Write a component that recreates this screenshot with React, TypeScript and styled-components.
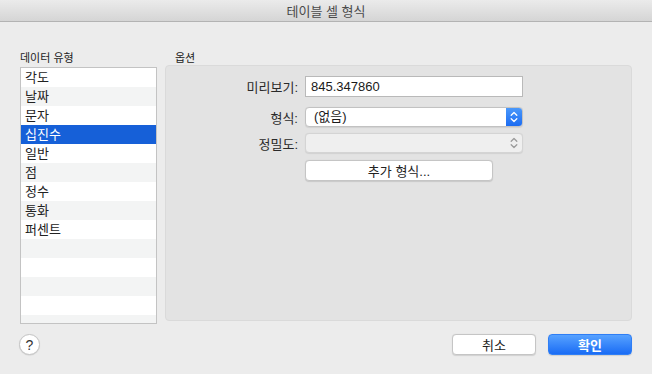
import styled, { createGlobalStyle } from "styled-components";

const GlobalStyles = createGlobalStyle`
  html, body {
    margin: 0;
    padding: 0;
    background: #ececec;
  }
  body {
    font-family: "Liberation Sans", "Noto Sans CJK KR", sans-serif;
    color: #222;
  }
`;

const Window = styled.div`
  width: 652px;
  height: 374px;
  display: flex;
  flex-direction: column;
  background: #ececec;
  overflow: hidden;
`;

const TitleBar = styled.div`
  height: 21px;
  border-bottom: 1px solid #b3b3b3;
  background: linear-gradient(#ebebeb, #d5d5d5);
  display: flex;
  align-items: center;
  justify-content: center;
  font-size: 13px;
  color: #4a4a4a;
`;

const Body = styled.div`
  display: grid;
  grid-template-columns: 137px 467px;
  column-gap: 8px;
  padding: 29px 20px 0 20px;
`;

const Column = styled.div`
  display: flex;
  flex-direction: column;
`;

const SectionLabel = styled.div<{ $indent: number }>`
  font-size: 11px;
  line-height: 14px;
  height: 14px;
  padding-left: ${(p) => p.$indent}px;
  color: #222;
`;

const List = styled.div`
  margin-top: 2px;
  height: 255px;
  border: 1px solid #c3c3c3;
  background: #fff;
  overflow: hidden;
`;

const ListRow = styled.div<{ $odd: boolean; $selected?: boolean }>`
  height: 19px;
  line-height: 19px;
  padding-left: 4px;
  font-size: 13px;
  background: ${(p) => (p.$selected ? "#1660d8" : p.$odd ? "#f3f4f4" : "#fff")};
  color: ${(p) => (p.$selected ? "#fff" : "#222")};
`;

const Panel = styled.div`
  height: 256px;
  border: 1px solid #dadada;
  border-radius: 4px;
  background: #e3e3e3;
  padding-top: 10px;
  box-sizing: border-box;
`;

const FormRow = styled.div<{ $gap: number }>`
  display: grid;
  grid-template-columns: 132px 218px;
  column-gap: 7px;
  align-items: center;
  margin-top: ${(p) => p.$gap}px;
`;

const FieldLabel = styled.div`
  text-align: right;
  font-size: 13px;
  color: #2a2a2a;
`;

const TextField = styled.div`
  height: 21px;
  box-sizing: border-box;
  border: 1px solid #b9b9b9;
  background: #fff;
  font-size: 13px;
  line-height: 19px;
  padding-left: 5px;
  color: #1a1a1a;
`;

const Select = styled.div<{ $disabled?: boolean }>`
  height: 20px;
  box-sizing: border-box;
  border: 1px solid ${(p) => (p.$disabled ? "#d4d4d4" : "#c2c2c2")};
  border-radius: 4px;
  background: ${(p) => (p.$disabled ? "#efefef" : "#fff")};
  display: flex;
  align-items: stretch;
  font-size: 13px;
  box-shadow: 0 0.5px 1px rgba(0, 0, 0, 0.08);
  overflow: hidden;
`;

const SelectText = styled.div`
  flex: 1;
  line-height: 18px;
  padding-left: 8px;
  color: #1a1a1a;
`;

const Stepper = styled.div<{ $active: boolean }>`
  width: 16px;
  display: flex;
  align-items: center;
  justify-content: center;
  background: ${(p) => (p.$active ? "linear-gradient(#4a98fb, #1c6cf2)" : "transparent")};
  color: ${(p) => (p.$active ? "#fff" : "#9a9a9a")};
`;

const PushButton = styled.div<{ $width: number; $primary?: boolean }>`
  width: ${(p) => p.$width}px;
  height: 21px;
  box-sizing: border-box;
  border-radius: 4px;
  display: flex;
  align-items: center;
  justify-content: center;
  font-size: 13px;
  font-weight: ${(p) => (p.$primary ? 600 : 400)};
  border: 1px solid ${(p) => (p.$primary ? "#2f7ef5" : "#c5c5c5")};
  background: ${(p) => (p.$primary ? "linear-gradient(#57a2ff, #1a6cf5)" : "#fff")};
  color: ${(p) => (p.$primary ? "#fff" : "#222")};
  box-shadow: 0 0.5px 1px rgba(0, 0, 0, 0.12);
`;

const Footer = styled.div`
  display: flex;
  align-items: center;
  padding: 10px 20px 0 19px;
  gap: 12px;
`;

const HelpButton = styled.div`
  width: 21px;
  height: 21px;
  box-sizing: border-box;
  border-radius: 50%;
  border: 1px solid #c5c5c5;
  background: #fff;
  display: flex;
  align-items: center;
  justify-content: center;
  font-size: 14px;
  color: #333;
  box-shadow: 0 0.5px 1px rgba(0, 0, 0, 0.12);
`;

const Spacer = styled.div`
  flex: 1;
`;

function Chevrons() {
  return (
    <svg width="8" height="12" viewBox="0 0 8 12" fill="none" stroke="currentColor" strokeWidth="1.3" strokeLinecap="round" strokeLinejoin="round">
      <path d="M1.2 4.2 4 1.5l2.8 2.7" />
      <path d="M1.2 7.8 4 10.5l2.8-2.7" />
    </svg>
  );
}

const types = ["각도", "날짜", "문자", "십진수", "일반", "점", "정수", "통화", "퍼센트", "", "", "", "", ""];

function App() {
  return (
    <Window>
      <GlobalStyles />
      <TitleBar>테이블 셀 형식</TitleBar>
      <Body>
        <Column>
          <SectionLabel $indent={0}>데이터 유형</SectionLabel>
          <List>
            {types.map((t, i) => (
              <ListRow key={i} $odd={i % 2 === 1} $selected={t === "십진수"}>
                {t}
              </ListRow>
            ))}
          </List>
        </Column>
        <Column>
          <SectionLabel $indent={10}>옵션</SectionLabel>
          <Panel>
            <FormRow $gap={0}>
              <FieldLabel>미리보기:</FieldLabel>
              <TextField>845.347860</TextField>
            </FormRow>
            <FormRow $gap={10}>
              <FieldLabel>형식:</FieldLabel>
              <Select>
                <SelectText>(없음)</SelectText>
                <Stepper $active>
                  <Chevrons />
                </Stepper>
              </Select>
            </FormRow>
            <FormRow $gap={6}>
              <FieldLabel>정밀도:</FieldLabel>
              <Select $disabled>
                <SelectText />
                <Stepper $active={false}>
                  <Chevrons />
                </Stepper>
              </Select>
            </FormRow>
            <FormRow $gap={7}>
              <span />
              <PushButton $width={188}>추가 형식...</PushButton>
            </FormRow>
          </Panel>
        </Column>
      </Body>
      <Footer>
        <HelpButton>?</HelpButton>
        <Spacer />
        <PushButton $width={84}>취소</PushButton>
        <PushButton $width={84} $primary>
          확인
        </PushButton>
      </Footer>
    </Window>
  );
}

export default App;
